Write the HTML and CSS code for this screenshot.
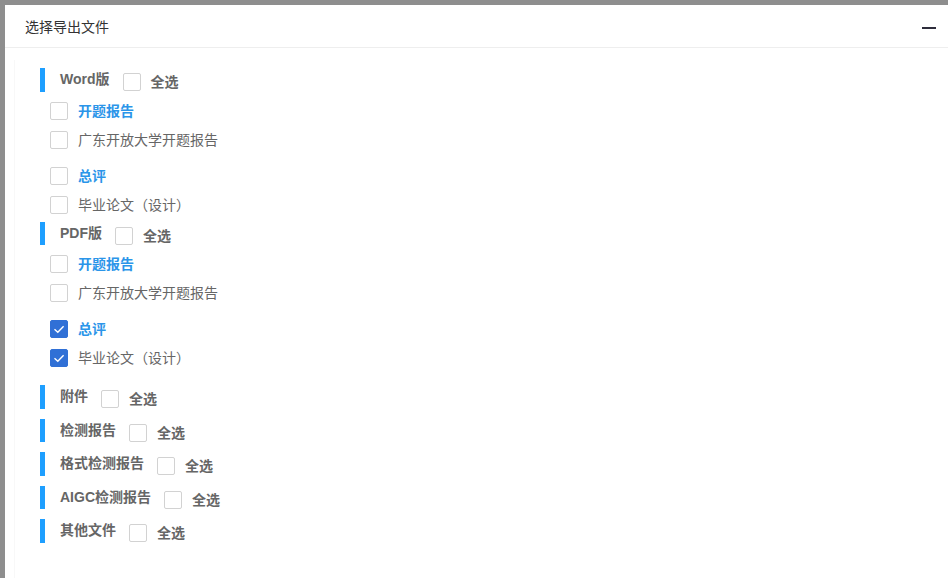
FILE: index.html
```html
<!DOCTYPE html>
<html>
	<head>
		<meta charset="UTF-8">
		<title>选择导出文件</title>
		<link rel="stylesheet" href="styles.css">
	</head>
	<body>
		<div class="dialog">
			<div class="dialog-title">
				<span>选择导出文件</span>
				<i class="min-btn"></i>
			</div>
			<div class="dialog-body">
				<!-- Word版 -->
				<div class="sec">
					<div class="sec-head">
						<span class="label">Word版</span>
						<i class="cb"></i>
						<span class="all">全选</span>
					</div>
					<div class="group">
						<div class="item title"><i class="cb"></i><span>开题报告</span></div>
						<div class="item"><i class="cb"></i><span>广东开放大学开题报告</span></div>
					</div>
					<div class="group">
						<div class="item title"><i class="cb"></i><span>总评</span></div>
						<div class="item"><i class="cb"></i><span>毕业论文（设计）</span></div>
					</div>
				</div>
				<!-- PDF版 -->
				<div class="sec sec-pdf">
					<div class="sec-head">
						<span class="label">PDF版</span>
						<i class="cb"></i>
						<span class="all">全选</span>
					</div>
					<div class="group">
						<div class="item title"><i class="cb"></i><span>开题报告</span></div>
						<div class="item"><i class="cb"></i><span>广东开放大学开题报告</span></div>
					</div>
					<div class="group">
						<div class="item title">
							<i class="cb checked"><svg viewBox="0 0 16 16"><polyline points="3.5,8.2 6.8,11.2 12.6,5.2"/></svg></i>
							<span>总评</span>
						</div>
						<div class="item">
							<i class="cb checked"><svg viewBox="0 0 16 16"><polyline points="3.5,8.2 6.8,11.2 12.6,5.2"/></svg></i>
							<span>毕业论文（设计）</span>
						</div>
					</div>
				</div>
				<!-- 其他 -->
				<div class="sec sec-first">
					<div class="sec-head">
						<span class="label">附件</span>
						<i class="cb"></i>
						<span class="all">全选</span>
					</div>
				</div>
				<div class="sec">
					<div class="sec-head">
						<span class="label">检测报告</span>
						<i class="cb"></i>
						<span class="all">全选</span>
					</div>
				</div>
				<div class="sec">
					<div class="sec-head">
						<span class="label">格式检测报告</span>
						<i class="cb"></i>
						<span class="all">全选</span>
					</div>
				</div>
				<div class="sec">
					<div class="sec-head">
						<span class="label">AIGC检测报告</span>
						<i class="cb"></i>
						<span class="all">全选</span>
					</div>
				</div>
				<div class="sec">
					<div class="sec-head">
						<span class="label">其他文件</span>
						<i class="cb"></i>
						<span class="all">全选</span>
					</div>
				</div>
			</div>
		</div>
	</body>
</html>
```

FILE: styles.css
```css
html,body{
	height: 100%;
	width: 100%;
}
*{
	margin: 0;
	padding: 0;
	box-sizing: border-box;
}
body{
	background: #8e8e8e;
	padding: 5px 0 0 5px;
	overflow: hidden;
	font-family: "Liberation Sans", "Noto Sans CJK SC", sans-serif;
	font-size: 14px;
}
.dialog{
	height: 100%;
	background: #fff;
	display: flex;
	flex-direction: column;
}
.dialog-title{
	height: 43px;
	border-bottom: 1px solid #eee;
	display: flex;
	align-items: center;
	justify-content: space-between;
	padding: 0 12px 0 20px;
	color: #333;
	flex: none;
}
.min-btn{
	width: 14px;
	height: 2px;
	margin-top: 4px;
	background: #2e2d3c;
}
.dialog-body{
	flex: 1;
	margin: 12px 0 0 9px;
	border-left: 1px solid #f8f8f8;
	padding: 8px 0 0 25px;
}
/*每个分类*/
.sec{
	margin-top: 10px;
}
.sec:first-child{
	margin-top: 0;
}
.sec-pdf{
	margin-top: 8px;
}
.sec-first{
	margin-top: 18px;
}
.sec-head{
	display: flex;
	align-items: flex-start;
	height: 23.5px;
}
.sec-head::before{
	content: "";
	width: 5px;
	height: 100%;
	background: #1e9fff;
}
.sec-head .label{
	margin-left: 15px;
	line-height: 23.5px;
	font-weight: bold;
	color: #666;
}
.sec-head .cb{
	margin: 5px 0 0 13px;
}
.all{
	margin: 5px 0 0 10px;
	line-height: 18px;
	font-weight: bold;
	color: #666;
}
/*复选框*/
.cb{
	display: block;
	flex: none;
	width: 18px;
	height: 18px;
	border: 1px solid #d2d2d2;
	border-radius: 2px;
	background: #fff;
}
.cb.checked{
	background: #3070d6;
	border-color: #3070d6;
}
.cb svg{
	display: block;
	width: 16px;
	height: 16px;
}
.cb svg polyline{
	fill: none;
	stroke: #fff;
	stroke-width: 1.4;
}
.group{
	margin-top: 18px;
	padding-left: 10px;
}
.sec-head + .group{
	margin-top: 10px;
}
.item{
	display: flex;
	align-items: center;
	height: 18px;
	margin-top: 11px;
	color: #666;
}
.item:first-child{
	margin-top: 0;
}
.item span{
	margin-left: 10px;
	line-height: 18px;
}
.item.title span{
	color: #2b95e9;
	font-weight: bold;
}
```
